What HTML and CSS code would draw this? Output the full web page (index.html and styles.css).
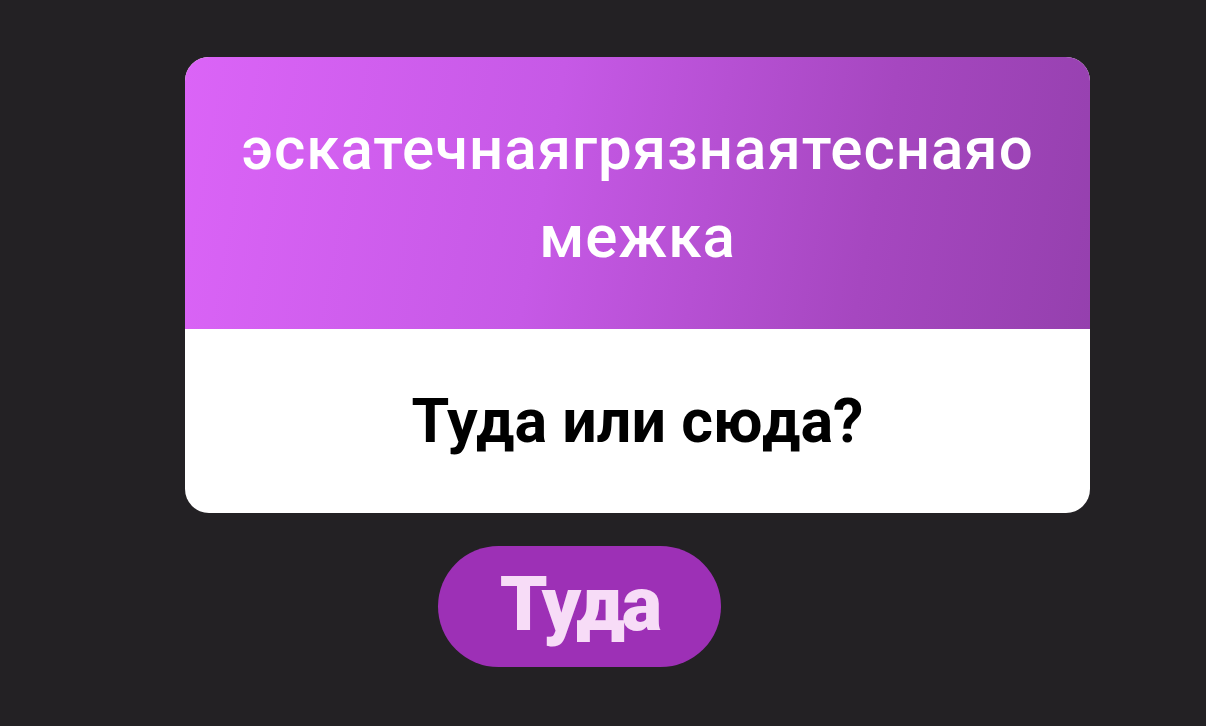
FILE: index.html
```html
<!DOCTYPE html>
<html lang="ru">
<head>
    <meta charset="UTF-8">
    <meta name="viewport" content="width=device-width, initial-scale=1.0">
    <title>Туда или сюда</title>
    <link rel="stylesheet" href="styles.css">
</head>
<body>
    <div class="screen">
        <div class="question-card">
            <div class="card-head">
                <h1 class="card-title">эскатечнаягрязнаятеснаяо межка</h1>
            </div>
            <div class="card-body">
                <p class="card-question">Туда или сюда?</p>
            </div>
        </div>
        <button class="answer-btn">Туда</button>
    </div>
</body>
</html>
```

FILE: styles.css
```css
html, body {
    margin: 0;
    height: 100%;
}
body {
    background: #232124;
    font-family: Roboto, "Noto Sans", sans-serif;
    overflow: hidden;
}
.screen {
    padding: 57px 0 0 185px;
    display: flex;
    flex-direction: column;
    align-items: flex-start;
}
.question-card {
    width: 905px;
    border-radius: 24px;
    overflow: hidden;
    background: #fff;
}
.card-head {
    height: 272px;
    display: flex;
    align-items: center;
    justify-content: center;
    background: linear-gradient(100deg, #db64f7 0%, #c659e6 40%, #a647c0 75%, #9540ae 100%);
}
.card-title {
    margin: 0;
    padding: 0 30px;
    color: #fff;
    font-size: 60px;
    font-weight: 500;
    letter-spacing: 1px;
    line-height: 88px;
    text-align: center;
    word-break: break-all;
}
.card-body {
    height: 184px;
    display: flex;
    align-items: center;
    justify-content: center;
}
.card-question {
    margin: 0;
    color: #000;
    font-size: 61px;
    font-weight: 700;
}
.answer-btn {
    margin: 33px 0 0 253px;
    width: 283px;
    height: 121px;
    border: none;
    border-radius: 61px;
    background: #9d30b6;
    color: #f7dcf7;
    font-family: Roboto, sans-serif;
    font-size: 76px;
    font-weight: 900;
    letter-spacing: -3px;
    padding: 0 0 6px;
}
```
